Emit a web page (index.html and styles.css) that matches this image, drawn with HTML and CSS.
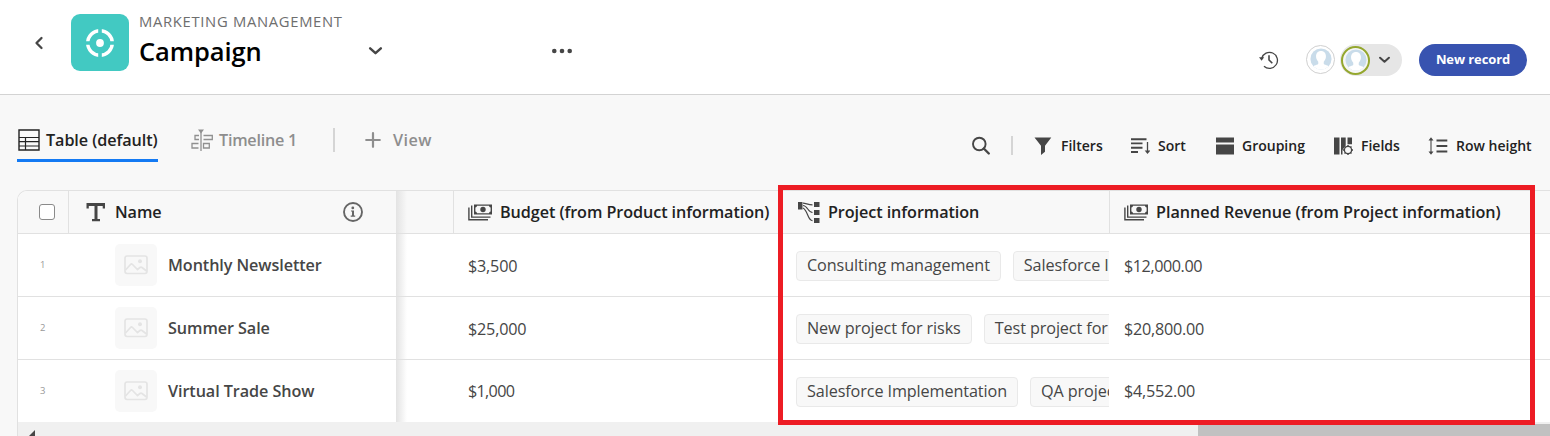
FILE: index.html
```html
<!DOCTYPE html>
<html lang="en">
<head>
<meta charset="utf-8">
<title>Campaign</title>
<link rel="stylesheet" href="styles.css">
</head>
<body>
<svg class="defs" width="0" height="0">
  <symbol id="money" viewBox="0 0 24 17">
    <path fill="#464646" fill-rule="evenodd" d="M6 .5h18v10H6zM9 1.800A2 2 0 0 1 7.400 3.500v4A2 2 0 0 1 9 9.200h12a2 2 0 0 1 1.600-1.700v-4A2 2 0 0 1 21 1.800z"/>
    <circle cx="15" cy="5.500" r="2.700" fill="#464646"/>
    <path d="M3.700 1.500v11.600H22.500M.900 3.500v12.300H20" fill="none" stroke="#464646" stroke-width="1.400"/>
  </symbol>
  <symbol id="image" viewBox="0 0 24 20">
    <rect x="1" y="1" width="22" height="17.500" rx="2.200" fill="none" stroke="#e4e4e4" stroke-width="1.700"/>
    <circle cx="16" cy="6.300" r="2" fill="#e4e4e4"/>
    <path d="M1.500 15l5-5.500q1-1 2 0l5 5 2.500-2q1-.8 2 0l4.500 3.500" fill="none" stroke="#e4e4e4" stroke-width="1.700"/>
  </symbol>
  <symbol id="chevron" viewBox="0 0 14 9">
    <path d="M2 2l5 4.500L12 2" fill="none" stroke="#464646" stroke-width="2.300" stroke-linecap="round" stroke-linejoin="round"/>
  </symbol>
  <symbol id="person" viewBox="0 0 24 24">
    <defs><clipPath id="round"><circle cx="12" cy="12" r="11.500"/></clipPath></defs>
    <g clip-path="url(#round)">
      <rect width="24" height="24" fill="#c9dcea"/>
      <path fill="#fff" d="M12 3.200c3.400 0 5.400 2.400 5.400 5.800 0 2.600-1 4.500-2.400 5.900v2.300c0 1.300 5.500 1.200 7 4.800v3H2v-3c1.500-3.600 7-3.500 7-4.800v-2.300C7.600 13.500 6.600 11.600 6.600 9c0-3.400 2-5.800 5.400-5.800z"/>
    </g>
  </symbol>
</svg>

<header class="topbar">
  <svg class="back" viewBox="0 0 10 14" width="10" height="14"><path d="M7.500 2L2.500 7l5 5" fill="none" stroke="#464646" stroke-width="2.300" stroke-linecap="round" stroke-linejoin="round"/></svg>
  <div class="app-icon">
    <svg viewBox="0 0 30 30" width="30" height="30">
      <circle cx="15" cy="15" r="12.300" fill="none" stroke="#fff" stroke-width="3.400"/>
      <path d="M15 0v30M0 15h30" stroke="#42c9c2" stroke-width="3.600"/>
      <circle cx="15" cy="15" r="3.900" fill="#fff"/>
    </svg>
  </div>
  <div class="titles">
    <div class="workspace">MARKETING MANAGEMENT</div>
    <h1>Campaign</h1>
  </div>
  <svg class="title-chevron" width="15" height="10"><use href="#chevron"/></svg>
  <svg class="more" width="22" height="6" fill="#464646"><circle cx="3.300" cy="3" r="2.300"/><circle cx="11" cy="3" r="2.300"/><circle cx="18.700" cy="3" r="2.300"/></svg>
  <div class="actions">
    <svg class="history" viewBox="0 0 20 20" width="20" height="20">
      <path d="M2.700 8.300A8 8 0 1 1 5 16.200" fill="none" stroke="#464646" stroke-width="1.300"/>
      <path d="M0 7.200h5.200L2.600 10.800z" fill="#464646"/>
      <path d="M10 5.200V10l3.300 3.200" fill="none" stroke="#464646" stroke-width="1.600"/>
    </svg>
    <span class="avatar"><svg width="22" height="22"><use href="#person"/></svg></span>
    <span class="presence">
      <span class="avatar active"><svg width="22" height="22"><use href="#person"/></svg></span>
      <svg width="13" height="8"><use href="#chevron"/></svg>
    </span>
    <button class="primary">New record</button>
  </div>
</header>

<nav class="viewbar">
  <div class="tabs">
    <span class="tab current">
      <svg viewBox="0 0 22 22" width="22" height="22" fill="none" stroke="#222" stroke-width="1.400"><path d="M1 1h20v20H1z"/><path d="M1 8.500h20M1 12.700h20M1 17h20M7.500 8.500V21" stroke-width="1.200"/></svg>
      Table (default)
    </span>
    <span class="tab timeline">
      <svg viewBox="0 0 22 22" width="22" height="22" fill="none" stroke="#909090" stroke-width="1.300"><path d="M10 2v20M8 6.500H4v4h4M12.500 6.500h8.800v4h-8.800M7.500 14.500H1v4.500h6.500M12.500 14.500h5.800v4.500h-5.800z"/><path d="M7 .5h6l-3 4z" fill="#909090" stroke="none"/></svg>
      Timeline 1
    </span>
    <i class="rule"></i>
    <span class="tab add">
      <svg width="16" height="16" stroke="#8e8e8e" stroke-width="2.200" stroke-linecap="round"><path d="M8 1.200v13.600M1.200 8h13.600"/></svg>
      View
    </span>
  </div>
  <div class="tools">
    <svg class="search" width="20" height="20" fill="none" stroke="#464646" stroke-width="1.900"><circle cx="8.300" cy="8" r="6.300"/><path d="M12.800 12.500l5 5" stroke-width="2.400" stroke-linecap="round"/></svg>
    <i class="rule small"></i>
    <span class="tool"><svg width="19" height="18" fill="#464646"><path d="M.5.500h16.800L11 8.700v6.100L7 18V8.700z"/></svg>Filters</span>
    <span class="tool"><svg width="19" height="18" stroke="#464646" fill="none"><path d="M0 2.200h15.500M0 6.400h11.500M0 10.800h11.500M0 15h7" stroke-width="1.900"/><path d="M16.500 5v10" stroke-width="1.300"/><path d="M13.700 13.500h5.600l-2.800 3.500z" fill="#464646" stroke="none"/></svg>Sort</span>
    <span class="tool grouping"><svg width="19" height="18" fill="#464646"><path d="M0 .5h18v5H0zM0 7.500h18v10H0z"/></svg>Grouping</span>
    <span class="tool"><svg width="19" height="18" fill="#464646"><path d="M0 .5h5.500v17H0zM7 .5h4.700v8L8.500 13v4.500H7zM13.500.5h4.500v6.700h-4.500z"/><circle cx="14" cy="13" r="3.600" fill="#f8f8f8" stroke="#464646" stroke-width="1.300"/><path d="M14 8v1.600M14 16.400V18M9 13h1.600M17.400 13H19M10.500 9.500l1.100 1.100M16.400 15.400l1.100 1.100M17.500 9.500l-1.100 1.100M11.600 15.400l-1.100 1.100" stroke="#464646" stroke-width="1.400"/></svg>Fields</span>
    <span class="tool"><svg width="20" height="18" fill="none" stroke="#464646"><path d="M3 2v14" stroke-width="1.100"/><path d="M.5 3.500h5L3 .3zM.5 14.500h5L3 17.700z" fill="#464646" stroke="none"/><path d="M8.500 3.500h10.800M8.500 9h10.800M8.500 14.500h10.800" stroke-width="1.900"/></svg>Row height</span>
  </div>
</nav>

<main class="table">
  <div class="row head">
    <div class="cell pick"><i class="checkbox"></i></div>
    <div class="cell name">
      <svg class="type" width="20" height="19" fill="#464646"><path d="M.5 0h18.500v5.500h-2.300V3h-5.200v13h2.500v2.300H6V16h2.500V3H2.800v2.500H.5z"/></svg>
      Name
      <svg class="info" width="20" height="20"><circle cx="10" cy="10" r="9" fill="none" stroke="#666" stroke-width="1.900"/><circle cx="9.800" cy="5.900" r="1.400" fill="#666"/><path d="M8 8.400h3v5.100h1.200v1.200H7.700v-1.200H9V9.600H8z" fill="#666"/></svg>
    </div>
    <div class="cell spacer"></div>
    <div class="cell"><svg class="type" width="24" height="17"><use href="#money"/></svg>Budget (from Product information)</div>
    <div class="cell project">
      <svg class="type" width="22" height="21" fill="#464646"><path d="M0 0h4.500v7.500H0zM16 0h5.500v5H16zM16 8h5.500v5H16zM16 16h5.500v5H16z"/><path d="M5 1.200C8 1.200 10 2.800 14.500 2.800M5 3.500c4.500 0 5 7 9.500 7M5 6c5 2.500 4.500 12.500 9.500 12.700" fill="none" stroke="#464646" stroke-width="1.200"/></svg>
      Project information
    </div>
    <div class="cell planned"><svg class="type" width="24" height="17"><use href="#money"/></svg>Planned Revenue (from Project information)</div>
  </div>
  <div class="row">
    <div class="cell pick">1</div>
    <div class="cell name"><span class="thumb"><svg width="24" height="20"><use href="#image"/></svg></span>Monthly Newsletter</div>
    <div class="cell spacer"></div>
    <div class="cell money">$3,500</div>
    <div class="cell links"><span class="chip">Consulting management</span><span class="chip">Salesforce I</span></div>
    <div class="cell money decimal">$12,000.00</div>
  </div>
  <div class="row">
    <div class="cell pick">2</div>
    <div class="cell name"><span class="thumb"><svg width="24" height="20"><use href="#image"/></svg></span>Summer Sale</div>
    <div class="cell spacer"></div>
    <div class="cell money">$25,000</div>
    <div class="cell links"><span class="chip">New project for risks</span><span class="chip">Test project for</span></div>
    <div class="cell money decimal wide">$20,800.00</div>
  </div>
  <div class="row last">
    <div class="cell pick">3</div>
    <div class="cell name"><span class="thumb"><svg width="24" height="20"><use href="#image"/></svg></span>Virtual Trade Show</div>
    <div class="cell spacer"></div>
    <div class="cell money one">$1,000</div>
    <div class="cell links"><span class="chip">Salesforce Implementation</span><span class="chip">QA projec</span></div>
    <div class="cell money decimal wide">$4,552.00</div>
  </div>
  <div class="scrollbar">
    <svg width="8" height="14" fill="#464646"><path d="M7 0v14L0 7z"/></svg>
    <i class="thumb-bar"></i>
  </div>
</main>
<div class="callout"></div>
</body>
</html>
```
FILE: styles.css
```css
* { box-sizing: border-box; }
body {
  margin: 0;
  width: 1550px;
  height: 436px;
  overflow: hidden;
  position: relative;
  background: #f8f8f8;
  font-family: "Open Sans", "Noto Sans", sans-serif;
  font-size: 16.2px;
  letter-spacing: -0.08px;
  color: #464646;
}
svg { display: block; flex: none; }
.defs { position: absolute; }

.topbar {
  height: 95px;
  background: #fff;
  border-bottom: 1px solid #d3d3d3;
  display: flex;
  align-items: flex-start;
  padding: 14px 23px 0 34px;
}
.back { margin-top: 22px; }
.app-icon {
  width: 58px;
  height: 57px;
  margin-left: 27px;
  border-radius: 9px;
  background: #42c9c2;
  display: flex;
  align-items: center;
  justify-content: center;
}
.titles { width: 229px; margin-left: 10px; white-space: nowrap; }
.workspace { margin-top: -1px; font-size: 14.8px; line-height: 16px; letter-spacing: 0.68px; color: #6e6e6e; }
h1 {
  margin: 6px 0 0;
  font-size: 25.500px;
  line-height: 32px;
  font-weight: 600;
  letter-spacing: -0.1px;
  color: #000;
}
.title-chevron { margin-top: 32px; }
.more { margin: 34px 0 0 168px; }
.actions { display: flex; align-items: center; height: 32px; margin: 30px 0 0 auto; }
.history { margin-right: 27px; }
.avatar {
  width: 29px;
  height: 29px;
  border-radius: 50%;
  border: 1.500px solid #d0d0d0;
  background: #fff;
  display: flex;
  align-items: center;
  justify-content: center;
  margin-bottom: 2px;
}
.avatar.active { border: 2px solid #94a72e; margin: 0; background: #f6f6f6; }
.presence {
  width: 62px;
  height: 32px;
  margin: 0 17px 0 5px;
  border-radius: 16px;
  background: #e6e6e6;
  display: flex;
  align-items: center;
  justify-content: space-between;
  padding: 0 11px 0 1px;
}
.primary {
  width: 108px;
  height: 32px;
  border: 0;
  padding: 0 0 2px;
  border-radius: 16px;
  background: #3853b0;
  color: #fff;
  font: 700 13px "Open Sans", sans-serif;
  letter-spacing: -0.1px;
}

.viewbar {
  height: 95px;
  padding: 25px 0 0 17px;
  display: flex;
  justify-content: space-between;
  align-items: flex-start;
}
.tabs { display: flex; align-items: center; height: 42px; font-weight: 600; }
.tab { height: 42px; display: flex; align-items: center; gap: 6px; white-space: nowrap; color: #8e8e8e; padding-bottom: 3px; }
.tab.current { width: 141px; color: #222; border-bottom: 3px solid #147af3; padding: 0 0 0 1px; }
.tab.timeline { width: 142px; margin-left: 33px; letter-spacing: -0.26px; }
.rule { width: 2px; height: 24px; margin-bottom: 3px; background: #d5d5d5; }
.tab.add { margin-left: 30px; gap: 12px; letter-spacing: 0.4px; }
.tools {
  display: grid;
  grid-template-columns: 40px 23px 97px 85px 118px 94px 122px;
  align-items: center;
  height: 32px;
  margin-top: 9px;
  font-size: 14px;
  font-weight: 600;
  letter-spacing: 0;
  color: #222;
}
.tool { display: flex; align-items: center; gap: 8px; white-space: nowrap; }
.tool svg, .search { margin-top: 1px; }
.tool.grouping { gap: 7px; }
.rule.small { height: 19px; margin: 0; }

.table {
  width: 1533px;
  height: 246px;
  margin-left: 17px;
  border: 1px solid #e1e1e1;
  border-width: 1px 0 0 1px;
  border-radius: 10px 0 0 0;
  background: #fff;
  overflow: hidden;
}
.row {
  display: grid;
  grid-template-columns: 51px 327px 58px 328px 328px 1fr;
  height: 63px;
  border-bottom: 1px solid #e1e1e1;
}
.row.last { height: 62px; border-bottom: 0; }
.cell { display: flex; align-items: center; padding-left: 14px; white-space: nowrap; min-width: 0; }
.head { height: 43px; background: #f8f8f8; color: #222; font-weight: 600; }
.head .cell { border-right: 1px solid #e1e1e1; }
.head .type { margin-right: 8px; }
.head .project { padding-left: 16px; border-left: 0; }
.head .cell.planned { border-right: 0; letter-spacing: -0.01px; }
.head .cell.name { padding: 0 33px 0 17px; border-right: 0; }
.head .name .type { margin-right: 9px; }
.info { margin-left: auto; }
.pick { padding-left: 22px; font-size: 9.500px; color: #999; padding-bottom: 1px; }
.head .pick { padding-left: 21px; padding-bottom: 0; }
.checkbox { width: 16px; height: 16px; border: 1.500px solid #8a8a8a; border-radius: 3px; background: #fff; }
.cell.name { padding-left: 46px; font-weight: 600; }
.spacer { background: linear-gradient(90deg, #e3e3e3, rgba(255, 255, 255, 0) 11px); }
.thumb {
  width: 42px;
  height: 42px;
  margin-right: 11px;
  border-radius: 5px;
  background: #f8f8f8;
  display: flex;
  align-items: center;
  justify-content: center;
}
.money { padding-top: 2px; letter-spacing: -0.2px; }
.money.one { letter-spacing: -0.7px; }
.money.decimal { letter-spacing: -0.45px; }
.money.decimal.wide { letter-spacing: -0.25px; }
.row.last .cell { padding-top: 0; }
.links { gap: 12px; overflow: hidden; border-right: 1px solid #fff; letter-spacing: -0.1px; }
.chip {
  flex: none;
  height: 30px;
  margin-top: 1px;
  padding: 0 10px;
  border: 1px solid #e9e9e9;
  border-radius: 4px;
  background: #f8f8f8;
  line-height: 27px;
}
.scrollbar { height: 14px; background: #f0f0f0; display: flex; padding-left: 10px; overflow: hidden; }
.scrollbar svg { margin-top: 8px; }
.thumb-bar { flex: 1; margin: 2px 0 0 1162px; background: #c1c1c1; }
.callout {
  position: absolute;
  left: 778px;
  top: 185px;
  width: 757px;
  height: 240px;
  border: 5px solid #ed1c24;
}
```
